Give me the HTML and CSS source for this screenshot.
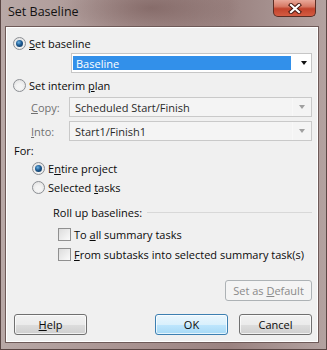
FILE: index.html
```html
<!DOCTYPE html>
<html lang="en">
<head>
  <meta charset="UTF-8">
  <title>Set Baseline</title>
  <link rel="stylesheet" href="styles.css">
</head>
<body>
  <div class="window">
    <div class="titlebar">
      <span class="title">Set Baseline</span>
      <div class="close">
        <svg width="14" height="11" viewBox="0 0 14 11">
          <path d="M3 2 L11 9 M11 2 L3 9" stroke="#4a1a12" stroke-width="4.2" stroke-linecap="square"/>
          <path d="M3 2 L11 9 M11 2 L3 9" stroke="#fff" stroke-width="2.2" stroke-linecap="square"/>
        </svg>
      </div>
    </div>

    <div class="client">
      <div class="row r-baseline">
        <span class="radio checked"></span>
        <span><u>S</u>et baseline</span>
      </div>
      <div class="combo active">
        <span class="sel">Baseline</span>
        <span class="arrow dark"></span>
      </div>

      <div class="row r-interim">
        <span class="radio"></span>
        <span>Set interim <u>p</u>lan</span>
      </div>
      <div class="field r-copy">
        <span class="flabel"><u>C</u>opy:</span>
        <div class="combo off">
          <span class="txt">Scheduled Start/Finish</span>
          <span class="btn"><span class="arrow"></span></span>
        </div>
      </div>
      <div class="field r-into">
        <span class="flabel"><u>I</u>nto:</span>
        <div class="combo off">
          <span class="txt">Start1/Finish1</span>
          <span class="btn"><span class="arrow"></span></span>
        </div>
      </div>

      <div class="row r-for">For:</div>
      <div class="row r-entire">
        <span class="radio checked"></span>
        <span>E<u>n</u>tire project</span>
      </div>
      <div class="row r-selected">
        <span class="radio"></span>
        <span>Selected <u>t</u>asks</span>
      </div>

      <div class="row r-rollup">
        <span>Roll up baselines:</span>
        <span class="rule"></span>
      </div>
      <div class="row r-check1">
        <span class="check"></span>
        <span>To <u>a</u>ll summary tasks</span>
      </div>
      <div class="row r-check2">
        <span class="check"></span>
        <span><u>F</u>rom subtasks into selected summary task(s)</span>
      </div>

      <div class="default-row">
        <button class="button disabled">Set as <u>D</u>efault</button>
      </div>

      <div class="buttons">
        <button class="button"><u>H</u>elp</button>
        <button class="button primary">OK</button>
        <button class="button">Cancel</button>
      </div>
    </div>
  </div>
</body>
</html>
```

FILE: styles.css
```css
body {
  margin: 0;
  font-family: "Open Sans", "Noto Sans", sans-serif;
  font-size: 11px;
  color: #0a0a0a;
}
.window {
  width: 327px; height: 350px;
  box-sizing: border-box;
  display: flex; flex-direction: column;
  padding: 0 7px 6px 4px;
  border: 1px solid #5a4644;
  border-top: none;
  background:
    radial-gradient(ellipse 90px 30px at 150px 8px, rgba(110,80,78,0.55), rgba(110,80,78,0) 100%),
    linear-gradient(90deg, #b8a8a6 0%, #a89290 40%, #9a8280 70%, #b3a2a0 100%);
}
.titlebar {
  height: 26px;
  display: flex;
  align-items: flex-start;
}
.title {
  padding: 3px 0 0 3px;
  font-size: 12.5px;
  color: #111;
}
.close {
  margin-left: auto;
  margin-right: 3px;
  width: 43px; height: 17px;
  box-sizing: border-box;
  border: 1px solid #5b2d24;
  border-top: none;
  border-radius: 0 0 5px 5px;
  background: linear-gradient(#e9a899 0%, #d77a66 40%, #c2432c 55%, #d45c42 100%);
  display: flex; align-items: center; justify-content: center;
}
.client {
  flex: 1;
  background: #f0f0f0;
  border: 1px solid #6e5a58;
  box-shadow: inset 0 0 0 1px #ffffff;
  padding: 0 6px 0 0;
  display: flex; flex-direction: column;
}
.row {
  height: 16px;
  display: flex;
  align-items: center;
  white-space: nowrap;
}
.radio {
  width: 13px; height: 13px;
  box-sizing: border-box;
  border-radius: 50%;
  border: 1px solid #8c8f94;
  background: radial-gradient(circle at 50% 60%, #f4f4f4 30%, #dcdcdc 100%);
  margin-right: 3px;
  flex: none;
  display: flex; align-items: center; justify-content: center;
}
.radio.checked::after {
  content: "";
  width: 7px; height: 7px;
  border-radius: 50%;
  background: radial-gradient(circle at 40% 35%, #6fb5e6 0%, #1d5a91 45%, #0b2c4e 100%);
}
.check {
  width: 13px; height: 13px;
  box-sizing: border-box;
  border: 1px solid #909090;
  background: linear-gradient(135deg, #dcdcdc, #fbfbfb);
  margin-right: 3px;
  flex: none;
}
.r-baseline { margin: 8px 0 0 7px; }
.combo {
  height: 20px;
  box-sizing: border-box;
  display: flex; align-items: center;
}
.combo.active {
  margin: 2px 0 0 65px;
  border: 1px solid #c6c6c6;
  background: #fff;
  padding: 2px 0 2px 1px;
}
.sel {
  flex: 1;
  height: 100%;
  background: #3290ea;
  color: #fff;
  padding-left: 3px;
  display: flex; align-items: center;
  margin-right: 10px;
}
.arrow {
  width: 0; height: 0;
  border-left: 3.5px solid transparent;
  border-right: 3.5px solid transparent;
  border-top: 4px solid #a0a0a0;
}
.arrow.dark {
  border-top-color: #111;
  margin-right: 4px;
}
.r-interim { margin: 4px 0 0 7px; }
.field {
  display: flex; align-items: center;
  margin-top: 4px;
}
.flabel {
  width: 38px;
  padding-left: 25px;
  color: #707070;
}
.combo.off {
  flex: 1;
  border: 1px solid #c9c9c9;
  background: #f4f4f4;
}
.txt {
  flex: 1;
  padding-left: 5px;
  color: #2a2a2a;
}
.btn {
  width: 18px; height: 100%;
  border-left: 1px solid #f8f8f8;
  display: flex; align-items: center; justify-content: center;
}
.r-for { margin: 1px 0 0 8px; }
.r-entire { margin: 2px 0 0 26px; }
.r-selected { margin: 3px 0 0 26px; }
.r-rollup { margin: 9px 0 0 47px; }
.rule {
  flex: 1;
  height: 1px;
  background: #d8d8d8;
  margin-left: 5px;
}
.r-check1 { margin: 6px 0 0 52px; }
.r-check2 { margin: 4px 0 0 52px; }
.default-row {
  display: flex; justify-content: flex-end;
  margin-top: 18px;
}
.button {
  width: 73px; height: 21px;
  box-sizing: border-box;
  font-family: inherit;
  font-size: 11px;
  color: #0a0a0a;
  border: 1px solid #707070;
  border-radius: 3px;
  background: linear-gradient(#f2f2f2 0%, #ebebeb 50%, #dddddd 51%, #cfcfcf 100%);
  box-shadow: inset 0 0 0 1px rgba(255,255,255,0.7);
  padding: 0;
}
.button.disabled {
  width: 87px;
  color: #8a8a8a;
  border-color: #adb2b5;
  background: #f4f4f4;
  box-shadow: none;
}
.buttons {
  display: flex;
  margin: 13px 0 0 8px;
}
.button.primary {
  margin-left: auto;
  margin-right: 11px;
  border-color: #3c7fb1;
  background: linear-gradient(#eaf6fd 0%, #d9f0fc 50%, #bee6fd 51%, #a7d9f5 100%);
}
```
